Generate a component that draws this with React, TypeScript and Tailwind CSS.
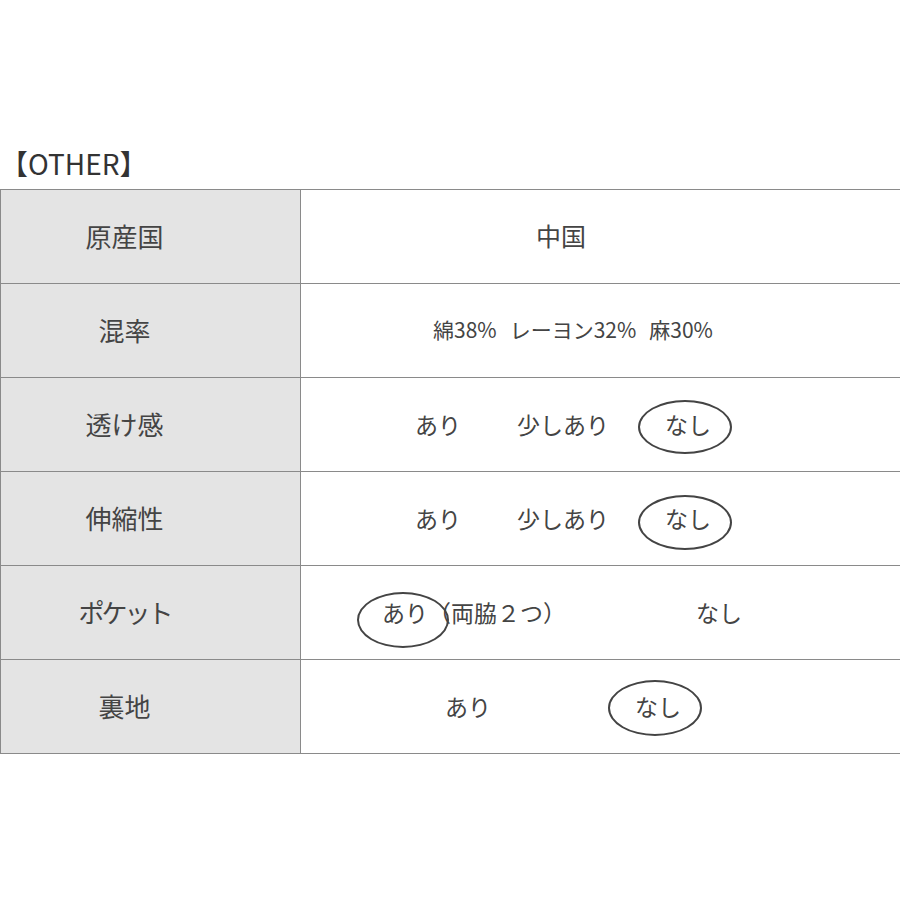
const font = { fontFamily: '"Noto Sans CJK JP", "Noto Sans", sans-serif' };

function Ring({ className }: { className: string }) {
  return <span className={`absolute border-2 border-[#444] rounded-[50%] ${className}`} />;
}

function Row({ label, tight, children }: { label: string; tight?: boolean; children: React.ReactNode }) {
  return (
    <div className="flex h-[94px] border-b border-[#8a8a8a]">
      <div
        className={`w-[301px] shrink-0 bg-[#e4e4e4] border-l border-r border-[#8a8a8a] flex items-center justify-center pr-[52px] text-[26px] text-[#444] pb-[2px] ${tight ? 'tracking-[-3px]' : ''}`}
      >
        {label}
      </div>
      <div className="relative flex-1 flex items-center text-[23px] text-[#444]">{children}</div>
    </div>
  );
}

export default function App() {
  return (
    <div className="w-[900px] h-[900px] bg-white overflow-hidden" style={font}>
      <div className="pt-[143px] h-[189px] text-[28px] leading-[40px] text-[#333]">【OTHER】</div>
      <div className="border-t border-[#8a8a8a]">
        <Row label="原産国">
          <span className="ml-[235px] pb-[2px] text-[25px]">中国</span>
        </Row>
        <Row label="混率">
          <div className="ml-[132px] flex gap-[13px] text-[21px] pb-[2px]">
            <span>綿38%</span>
            <span>レーヨン32%</span>
            <span>麻30%</span>
          </div>
        </Row>
        <Row label="透け感">
          <span className="ml-[114px]">あり</span>
          <span className="ml-[56px]">少しあり</span>
          <span className="ml-[56px]">なし</span>
          <Ring className="left-[337px] top-[22px] w-[94px] h-[54px]" />
        </Row>
        <Row label="伸縮性">
          <span className="ml-[114px]">あり</span>
          <span className="ml-[56px]">少しあり</span>
          <span className="ml-[56px]">なし</span>
          <Ring className="left-[337px] top-[23px] w-[94px] h-[55px]" />
        </Row>
        <Row label="ポケット" tight>
          <span className="ml-[81px]">あり（両脇２つ）</span>
          <span className="ml-[130px]">なし</span>
          <Ring className="left-[56px] top-[26px] w-[92px] h-[56px]" />
        </Row>
        <Row label="裏地">
          <span className="ml-[144px]">あり</span>
          <span className="ml-[144px]">なし</span>
          <Ring className="left-[307px] top-[20px] w-[94px] h-[56px]" />
        </Row>
      </div>
    </div>
  );
}
